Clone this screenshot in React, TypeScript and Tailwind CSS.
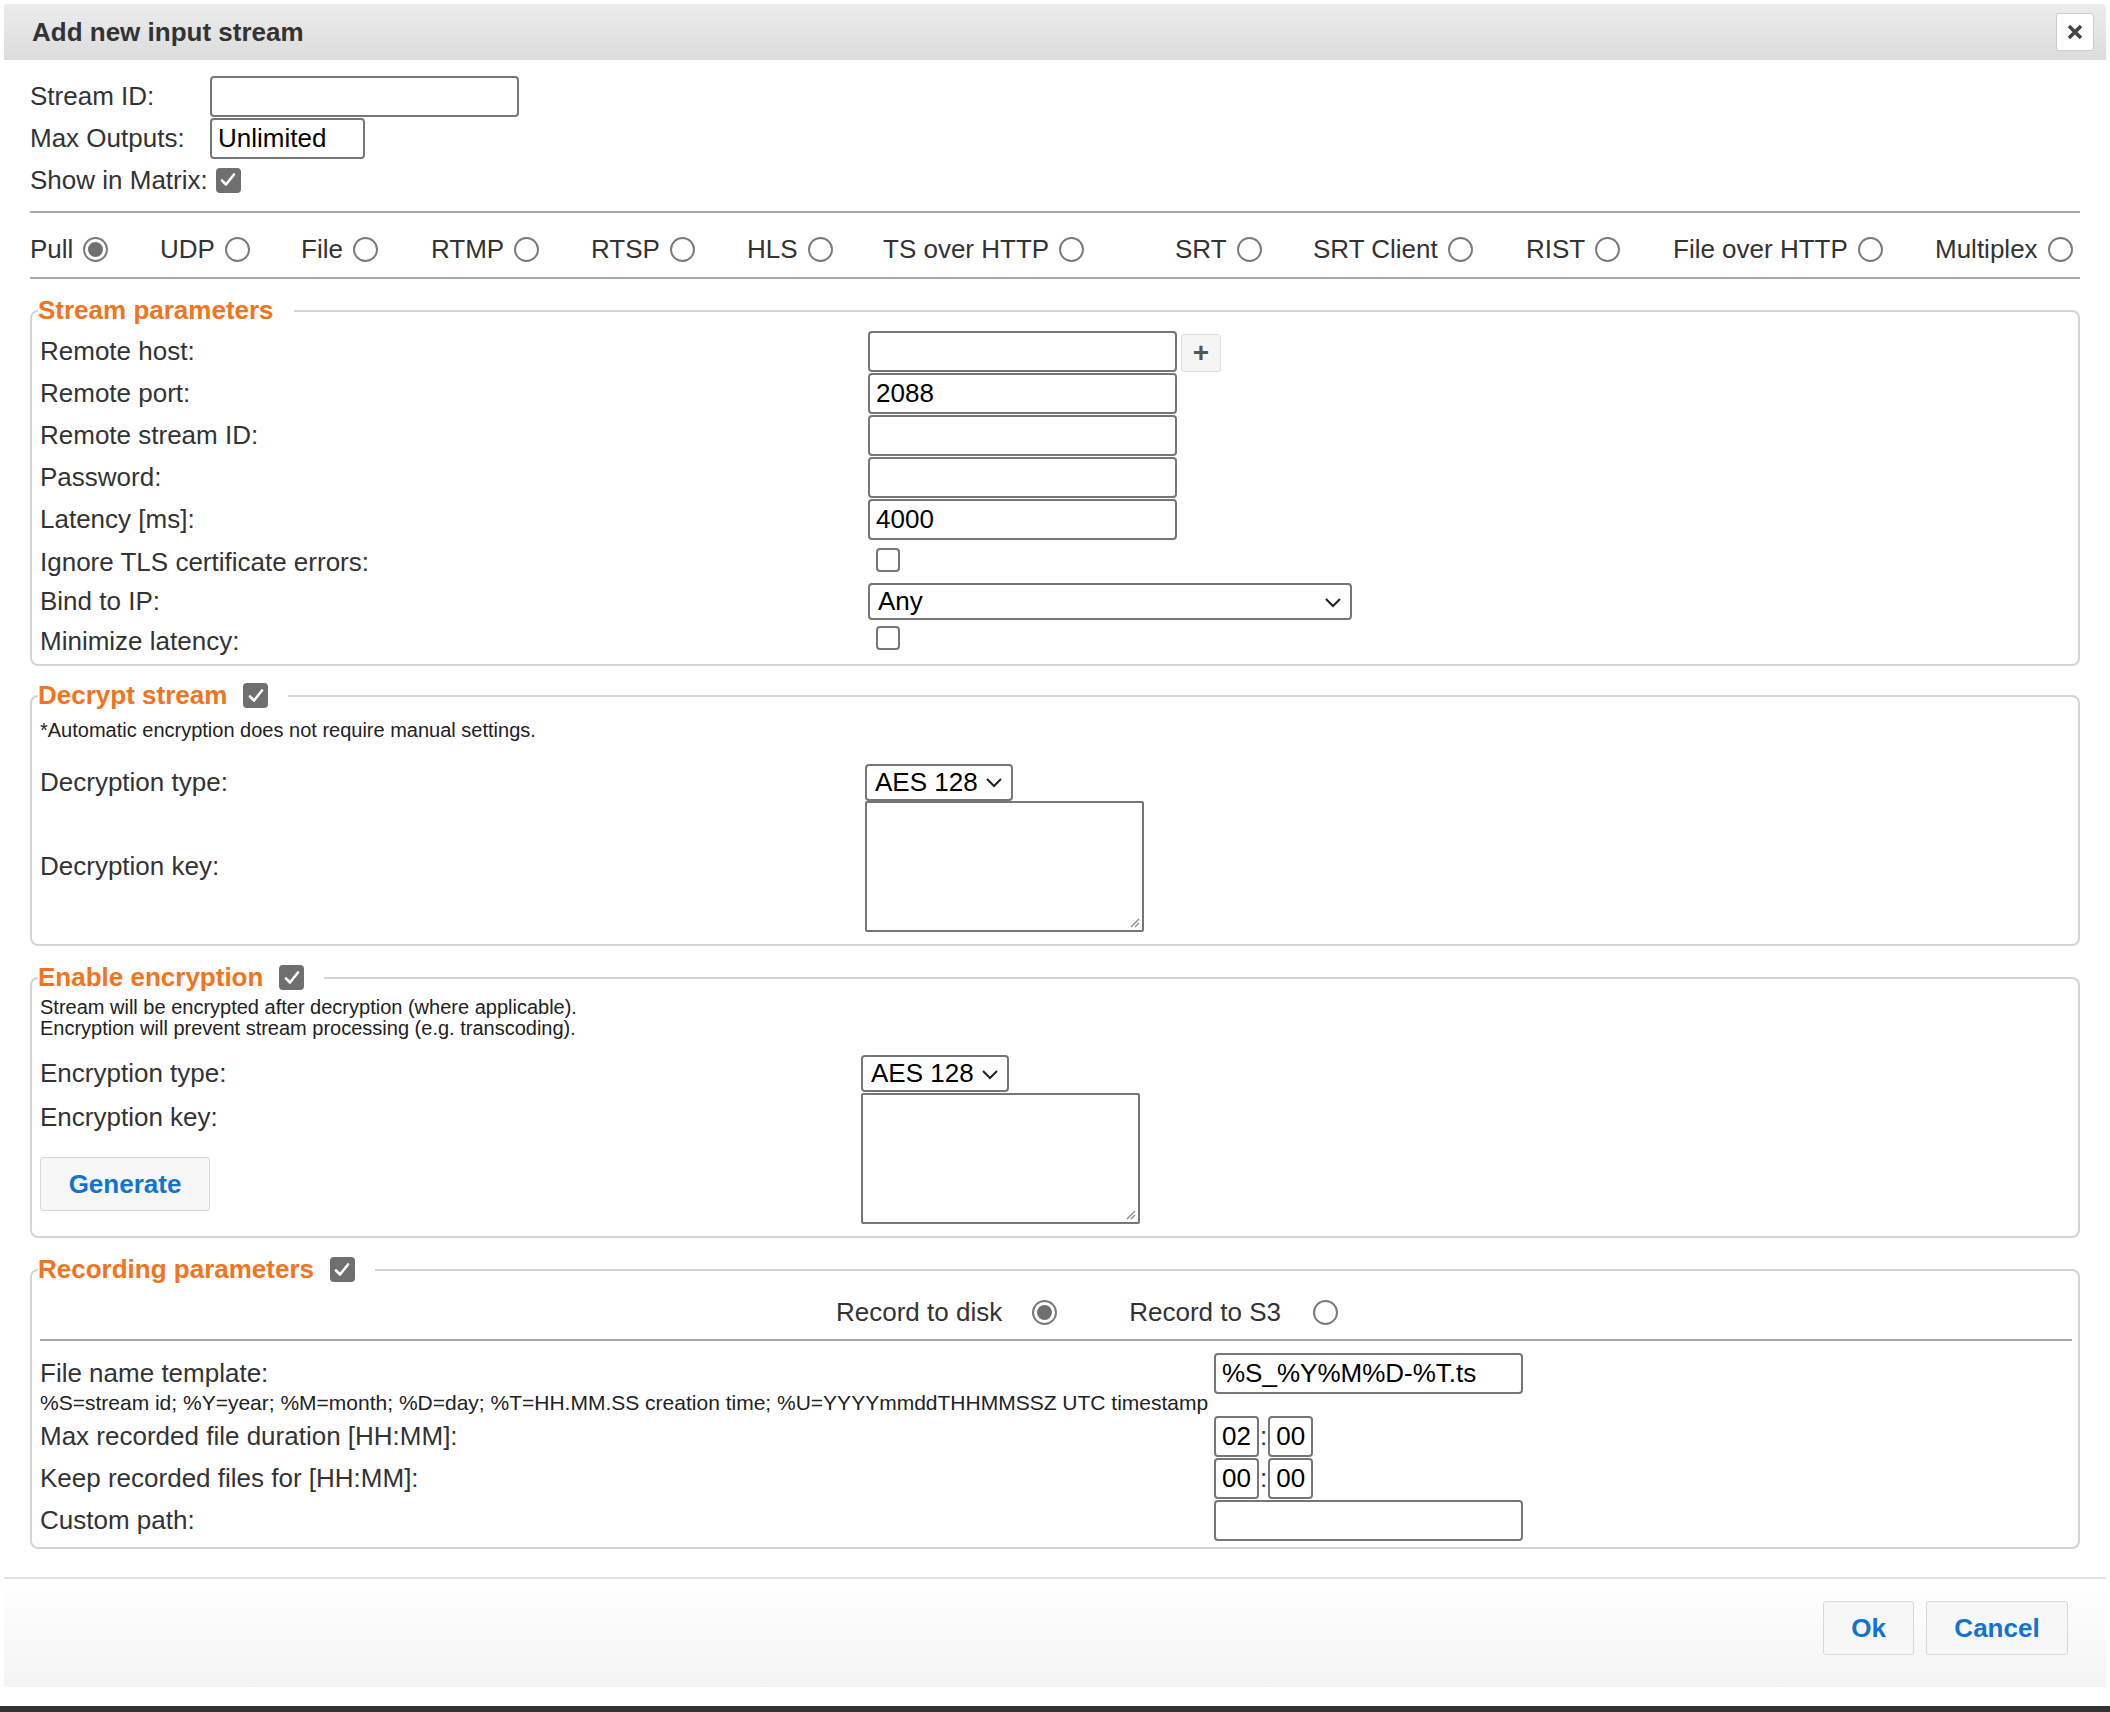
import React from "react"

const font = { fontFamily: '"Liberation Sans", Arial, sans-serif' }

function Check({ on }: { on?: boolean }) {
  if (!on) return <span className="inline-block shrink-0 w-[24px] h-[24px] rounded-[4px] border-2 border-[#767676] bg-white" />
  return (
    <span className="inline-flex shrink-0 w-[25px] h-[25px] rounded-[4px] bg-[#6f6f6f] items-center justify-center">
      <svg width="18" height="18" viewBox="0 0 18 18"><path d="M3 9.5l4 4 8-10" stroke="white" strokeWidth="2.6" fill="none" strokeLinecap="round" strokeLinejoin="round" /></svg>
    </span>
  )
}

function Radio({ on }: { on?: boolean }) {
  return (
    <span className="inline-flex shrink-0 w-[25px] h-[25px] rounded-full border-2 border-[#7a7a7a] bg-white items-center justify-center">
      {on && <span className="w-[15px] h-[15px] rounded-full bg-[#6f6f6f]" />}
    </span>
  )
}

function Input({ value = "", w = "w-[309px]" }: { value?: string; w?: string }) {
  return <div className={`${w} h-[41px] border-2 border-[#767676] rounded-[4px] bg-white px-[6px] flex items-center text-[26px] text-black`}>{value}</div>
}

function Select({ value, w }: { value: string; w: string }) {
  return (
    <div className={`${w} h-[37px] border-2 border-[#767676] rounded-[4px] bg-white px-[8px] flex items-center justify-between text-[26px] text-black`}>
      <span>{value}</span>
      <svg width="18" height="12" viewBox="0 0 18 12"><path d="M2 3l7 7 7-7" stroke="#222" strokeWidth="2" fill="none" /></svg>
    </div>
  )
}

function TextArea() {
  return (
    <div className="relative w-[279px] h-[131px] border-2 border-[#767676] rounded-[2px] bg-white">
      <svg className="absolute right-[2px] bottom-[2px]" width="12" height="12" viewBox="0 0 12 12"><path d="M11 3L3 11M11 7L7 11" stroke="#888" strokeWidth="1.3" /></svg>
    </div>
  )
}

function Legend({ text, check }: { text: string; check?: boolean }) {
  return (
    <legend className="-ml-[2px] px-[0px] flex items-center gap-[16px]">
      <span className="text-[#f27420] font-bold text-[26px]">{text}</span>
      {check !== undefined && <Check on={check} />}
      <span className="w-[4px]" />
    </legend>
  )
}

const Fieldset = ({ children, className = "" }: { children: React.ReactNode; className?: string }) => (
  <fieldset className={`border-2 border-[#d4d4d4] rounded-[8px] mx-[30px] px-[8px] ${className}`}>{children}</fieldset>
)

const protocols: [string, number][] = [
  ["Pull", 130], ["UDP", 141], ["File", 130], ["RTMP", 160], ["RTSP", 156], ["HLS", 136],
  ["TS over HTTP", 292], ["SRT", 138], ["SRT Client", 213], ["RIST", 147], ["File over HTTP", 262], ["Multiplex", 140],
]

export default function App() {
  return (
    <div style={font} className="w-[2110px] h-[1712px] bg-white text-[#333] relative overflow-hidden">
      {/* header */}
      <div className="mx-[4px] mt-[4px] h-[56px] rounded-t-[4px] bg-gradient-to-b from-[#ececec] to-[#dcdcdc] flex items-center justify-between pl-[28px] pr-[12px]">
        <span className="text-[26px] font-bold text-[#333]">Add new input stream</span>
        <div className="w-[38px] h-[38px] bg-white border border-[#ccc] rounded-[3px] flex items-center justify-center">
          <svg width="18" height="18" viewBox="0 0 18 18"><path d="M3 3l12 12M15 3L3 15" stroke="#444" strokeWidth="3.5" /></svg>
        </div>
      </div>

      {/* top fields */}
      <div className="pl-[30px] pt-[15px] text-[26px]">
        <div className="flex items-center h-[42px]"><span className="w-[180px]">Stream ID:</span><Input w="w-[309px]" /></div>
        <div className="flex items-center h-[42px]"><span className="w-[180px]">Max Outputs:</span><Input w="w-[155px]" value="Unlimited" /></div>
        <div className="flex items-center h-[42px] gap-[8px]"><span>Show in Matrix:</span><Check on /></div>
      </div>

      <div className="mx-[30px] mt-[10px] border-t-2 border-[#a8a8a8]" />
      <div className="ml-[30px] flex items-center h-[64px] pt-[8px] text-[26px]">
        {protocols.map(([p, w], i) => (
          <div key={p} className="flex items-center gap-[10px] shrink-0" style={{ width: w }}>
            <span>{p}</span><Radio on={i === 0} />
          </div>
        ))}
      </div>
      <div className="mx-[30px] border-t-2 border-[#a8a8a8]" />

      {/* stream parameters */}
      <Fieldset className="mt-[12px] pb-[2px]">
        <Legend text="Stream parameters" />
        <div className="grid grid-cols-[828px_1fr] text-[26px] items-center">
          <span className="h-[42px] flex items-center">Remote host:</span>
          <div className="flex items-center gap-[4px]"><Input /><div className="w-[40px] h-[38px] bg-[#f5f5f5] border border-[#ddd] rounded-[3px] flex items-center justify-center text-[#555] font-bold text-[28px] mt-[4px]">+</div></div>
          <span className="h-[42px] flex items-center">Remote port:</span><Input value="2088" />
          <span className="h-[42px] flex items-center">Remote stream ID:</span><Input />
          <span className="h-[42px] flex items-center">Password:</span><Input />
          <span className="h-[42px] flex items-center">Latency [ms]:</span><Input value="4000" />
          <span className="h-[40px] flex items-end">Ignore TLS certificate errors:</span><div className="pl-[8px] pt-[4px]"><Check /></div>
          <span className="h-[36px] flex items-center">Bind to IP:</span><Select value="Any" w="w-[484px]" />
          <span className="h-[42px] flex items-center">Minimize latency:</span><div className="pl-[8px]"><Check /></div>
        </div>
      </Fieldset>

      {/* decrypt */}
      <Fieldset className="mt-[10px] pb-[12px]">
        <Legend text="Decrypt stream" check />
        <div className="text-[20px] text-[#222] mt-[0px]">*Automatic encryption does not require manual settings.</div>
        <div className="grid grid-cols-[825px_1fr] text-[26px] items-center mt-[18px]">
          <span className="h-[38px] flex items-center">Decryption type:</span><Select value="AES 128" w="w-[148px]" />
          <span>Decryption key:</span><TextArea />
        </div>
      </Fieldset>

      {/* encryption */}
      <Fieldset className="mt-[12px] pb-[12px]">
        <Legend text="Enable encryption" check />
        <div className="text-[20px] text-[#222] leading-[21px] mt-[0px]">Stream will be encrypted after decryption (where applicable).<br />Encryption will prevent stream processing (e.g. transcoding).</div>
        <div className="grid grid-cols-[821px_1fr] text-[26px] mt-[16px]">
          <div className="flex flex-col">
            <span className="h-[36px] flex items-center">Encryption type:</span>
            <span className="h-[52px] flex items-center">Encryption key:</span>
            <div className="mt-[14px] w-[170px] h-[54px] bg-[#f7f7f7] border border-[#d8d8d8] rounded-[3px] flex items-center justify-center text-[#1173d4] font-bold text-[26px]">Generate</div>
          </div>
          <div className="flex flex-col gap-[1px]">
            <Select value="AES 128" w="w-[148px]" />
            <TextArea />
          </div>
        </div>
      </Fieldset>

      {/* recording */}
      <Fieldset className="mt-[12px] pb-[6px]">
        <Legend text="Recording parameters" check />
        <div className="flex items-center h-[46px] text-[26px] pl-[796px]">
          <span className="mr-[30px]">Record to disk</span><Radio on />
          <span className="ml-[72px] mr-[32px]">Record to S3</span><Radio />
        </div>
        <div className="border-t-2 border-[#a8a8a8] mt-[4px] mb-[12px] mr-[-2px]" />
        <div className="grid grid-cols-[1174px_1fr] text-[26px] items-center">
          <span className="h-[40px] flex items-center">File name template:</span><Input value="%S_%Y%M%D-%T.ts" />
        </div>
        <div className="text-[21px] text-[#222] leading-[22px] -mt-[2px] mb-[2px] whitespace-nowrap">%S=stream id; %Y=year; %M=month; %D=day; %T=HH.MM.SS creation time; %U=YYYYmmddTHHMMSSZ UTC timestamp</div>
        <div className="grid grid-cols-[1174px_1fr] text-[26px] items-center gap-y-[1px]">
          <span>Max recorded file duration [HH:MM]:</span>
          <div className="flex items-center"><Input w="w-[45px]" value="02" /><span className="px-[1px]">:</span><Input w="w-[45px]" value="00" /></div>
          <span>Keep recorded files for [HH:MM]:</span>
          <div className="flex items-center"><Input w="w-[45px]" value="00" /><span className="px-[1px]">:</span><Input w="w-[45px]" value="00" /></div>
          <span>Custom path:</span><Input />
        </div>
      </Fieldset>

      {/* footer */}
      <div className="mt-[28px] mx-[4px] border-t-2 border-[#e2e2e2] h-[110px] bg-gradient-to-b from-white to-[#f4f4f4] flex items-start justify-end gap-[12px] pr-[38px] pt-[22px]">
        <div className="w-[91px] h-[54px] bg-[#f7f7f7] border border-[#d8d8d8] rounded-[3px] flex items-center justify-center text-[#1173d4] font-bold text-[26px]">Ok</div>
        <div className="w-[142px] h-[54px] bg-[#f7f7f7] border border-[#d8d8d8] rounded-[3px] flex items-center justify-center text-[#1173d4] font-bold text-[26px]">Cancel</div>
      </div>
      <div className="absolute left-0 right-0 bottom-0 h-[6px] bg-[#333]" />
    </div>
  )
}
